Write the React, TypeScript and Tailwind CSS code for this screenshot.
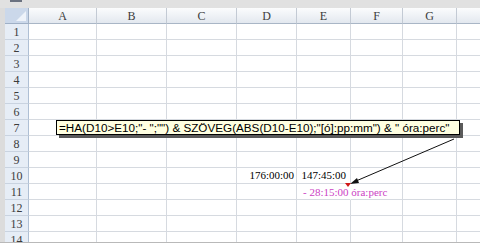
const cols = [
  { name: "A", w: 68 },
  { name: "B", w: 70 },
  { name: "C", w: 70 },
  { name: "D", w: 60 },
  { name: "E", w: 54 },
  { name: "F", w: 52 },
  { name: "G", w: 54 },
  { name: "", w: 40 },
];

const rows = Array.from({ length: 14 }, (_, i) => i + 1);

const serif = "font-['Liberation_Serif','Times_New_Roman',serif]";

function Cell({ col, row }: { col: string; row: number }) {
  if (row === 10 && (col === "D" || col === "E")) {
    return (
      <div className={`flex h-4 items-center justify-end border-b border-r border-[#d6dae0] bg-white text-[11px] text-black ${serif} ${col === "D" ? "pr-[2px]" : "pr-[4px]"}`}>
        {col === "D" ? "176:00:00" : "147:45:00"}
      </div>
    );
  }
  if (row === 11 && col === "E") {
    // text spills into F, so the gridline between them is hidden
    return (
      <div className={`relative flex h-4 items-center border-b border-r border-[#d6dae0] border-r-white bg-white pl-[6px] pt-[2px] text-[11px] ${serif}`}>
        <span className="relative z-10 whitespace-nowrap text-[#cc3fc4]">- 28:15:00 óra:perc</span>
        {/* comment marker */}
        <span className="absolute -right-[1px] -top-[1px] z-20 h-0 w-0 border-l-[3px] border-r-[3px] border-t-[4px] border-l-transparent border-r-transparent border-t-[#d01818]" />
      </div>
    );
  }
  return <div className="h-4 border-b border-r border-[#d6dae0] bg-white" />;
}

export default function App() {
  return (
    <div className="relative flex h-[243px] w-[480px] flex-col overflow-hidden border-b border-[#b9b9b9] bg-[#dcdcdc]">
      {/* window chrome */}
      <div className="flex h-2 shrink-0 items-start bg-[#e1e1e1] pl-[10px]">
        <div className="h-[2px] w-[12px] bg-[#6b7280]" />
      </div>

      <div className="ml-[5px] flex">
        {/* row headers */}
        <div className="w-6 shrink-0">
          <div className="flex h-4 items-end justify-end border-b border-r border-[#9fb0c6] bg-[#cbd8ea] p-[2px]">
            <div className="h-0 w-0 border-b-[10px] border-l-[10px] border-b-[#eef3fa] border-l-transparent" />
          </div>
          {rows.map((r) => (
            <div
              key={r}
              className={`flex h-4 items-center justify-center border-b border-r border-[#aebfd4] border-b-[#c9d3e0] bg-[#e6edf6] pt-px text-[12px] text-[#3c3c3c] ${serif}`}
            >
              {r}
            </div>
          ))}
        </div>

        {/* columns */}
        {cols.map((c) => (
          <div key={c.name || "H"} className="shrink-0" style={{ width: c.w }}>
            <div
              className={`flex h-4 items-center justify-center border-b border-r border-[#c3cad4] border-b-[#a9b6c6] bg-gradient-to-b from-[#fbfcfd] to-[#e3e8ef] pt-px text-[12px] text-[#3c3c3c] ${serif}`}
            >
              {c.name}
            </div>
            {rows.map((r) => (
              <Cell key={r} col={c.name} row={r} />
            ))}
          </div>
        ))}
      </div>

      {/* formula note */}
      <div className="absolute left-[56px] top-[120px] h-[15px] w-[404px] whitespace-nowrap border border-black bg-[#ffffe1] pl-[2px] font-['Liberation_Sans',Arial,sans-serif] text-[11.7px] leading-[13px] text-black shadow-[3px_3px_0_#5a5a5a]">
        =HA(D10&gt;E10;"- ";"") &amp; SZÖVEG(ABS(D10-E10);"[ó]:pp:mm") &amp; " óra:perc"
      </div>

      <svg className="absolute left-0 top-0" width="480" height="243" viewBox="0 0 480 243">
        <line x1="454" y1="139" x2="356" y2="181" stroke="#111" strokeWidth="1" />
        <polygon points="350,184 357,178 359,183" fill="#111" />
      </svg>
    </div>
  );
}
